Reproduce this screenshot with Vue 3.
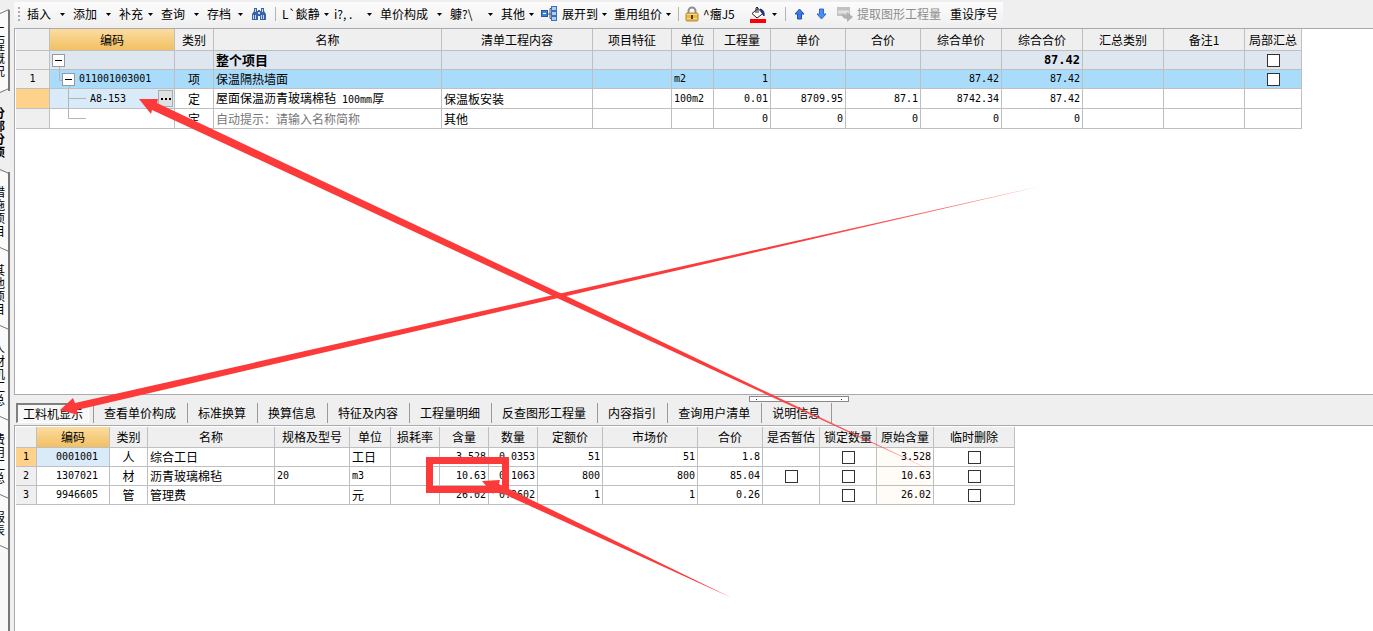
<script setup>
import { ref } from 'vue'

const sideTabs = [
  { text: '工程概况', size: 'l' },
  { text: '分部分项', size: 'l', active: true },
  { text: '措施项目', size: 'm' },
  { text: '其他项目', size: 'm' },
  { text: '人材机汇总', size: 'xl' },
  { text: '费用汇总', size: 'm' },
  { text: '报表', size: 's' },
]

const tools = [
  { label: '插入', caret: true },
  { label: '添加', caret: true },
  { label: '补充', caret: true },
  { label: '查询', caret: true },
  { label: '存档', caret: true },
  { icon: 'find', name: '查找' },
  { sep: true },
  { label: 'L`餤静', caret: true },
  { label: 'i?, .', caret: true },
  { label: '单价构成', caret: true },
  { label: '躿?\\', caret: true },
  { label: '其他', caret: true },
  { icon: 'expand', label: '展开到', caret: true },
  { label: '重用组价', caret: true },
  { sep: true },
  { icon: 'lock', label: '^癅J5' },
  { icon: 'fill', name: '填充颜色', caret: true },
  { sep: true },
  { icon: 'up', name: '上移' },
  { icon: 'down', name: '下移' },
  { icon: 'extract', label: '提取图形工程量', disabled: true },
  { label: '重设序号' },
]

const topHeads = ['', '编码', '类别', '名称', '清单工程内容', '项目特征', '单位', '工程量', '单价', '合价', '综合单价', '综合合价', '汇总类别', '备注1', '局部汇总']
const topRows = [
  { kind: 'root', no: '', code: '', type: '', name: '整个项目', content: '', unit: '', nums: ['', '', '', '', '87.42'], check: true },
  { kind: 'item', no: '1', code: '011001003001', type: '项', name: '保温隔热墙面', content: '', unit: 'm2', nums: ['1', '', '', '87.42', '87.42'], check: true },
  { kind: 'quota', no: '', code: 'A8-153', type: '定', name: '屋面保温沥青玻璃棉毡', spec: ' 100mm', tail: '厚', content: '保温板安装', unit: '100m2', nums: ['0.01', '8709.95', '87.1', '8742.34', '87.42'] },
  { kind: 'blank', no: '', code: '', type: '定', name: '自动提示：请输入名称简称', content: '其他', unit: '', nums: ['0', '0', '0', '0', '0'] },
]

const tabs = ['工料机显示', '查看单价构成', '标准换算', '换算信息', '特征及内容', '工程量明细', '反查图形工程量', '内容指引', '查询用户清单', '说明信息']
const activeTab = ref(0)

const lowHeads = ['', '编码', '类别', '名称', '规格及型号', '单位', '损耗率', '含量', '数量', '定额价', '市场价', '合价', '是否暂估', '锁定数量', '原始含量', '临时删除']
const lowRows = [
  { code: '0001001', type: '人', name: '综合工日', spec: '', unit: '工日', nums: ['', '3.528', '0.0353', '51', '51', '1.8'], est: false, orig: '3.528' },
  { code: '1307021', type: '材', name: '沥青玻璃棉毡', spec: '20', unit: 'm3', latin: true, nums: ['', '10.63', '0.1063', '800', '800', '85.04'], est: true, orig: '10.63' },
  { code: '9946605', type: '管', name: '管理费', spec: '', unit: '元', nums: ['', '26.02', '0.2602', '1', '1', '0.26'], est: false, orig: '26.02' },
]
</script>

<template>
  <div class="app">
    <nav class="side">
      <svg class="cap" width="10" height="5" viewBox="0 0 10 5" aria-hidden="true"><path d="M0 4.500L9 .5" /></svg>
      <button v-for="t in sideTabs" :key="t.text" type="button" class="side-tab" :class="['size-' + t.size, { active: t.active }]">
        <span>{{ t.text }}</span>
        <svg class="slant" width="10" height="5" viewBox="0 0 10 5" aria-hidden="true">
          <path :d="t.text === '工程概况' ? 'M0 4.500L9 .5' : 'M0 .5L9 4.500'" />
        </svg>
      </button>
      <div class="side-rest"></div>
    </nav>

    <main class="main">
      <header class="toolbar">
        <div class="tools">
          <span class="grip"></span>
          <template v-for="(t, i) in tools" :key="i">
            <span v-if="t.sep" class="sep"></span>
            <button v-else type="button" class="tool" :disabled="t.disabled" :aria-label="t.label || t.name">
              <svg v-if="t.icon === 'find'" width="16" height="16" viewBox="0 0 16 16">
                <path d="M3 2h3v3h1V4h2v1h1V2h3v3l2 3v6H9v-4H7v4H1V8l2-3z" fill="#3c62a8" />
                <path d="M4 3h1v3H4zM11 3h1v3h-1zM2 9h1v4H2zM4 9h1v4H4zM10 9h1v4h-1zM12 9h1v4h-1zM7 6h2v2H7z" fill="#c4d8f4" />
              </svg>
              <svg v-else-if="t.icon === 'expand'" width="17" height="16" viewBox="0 0 17 16">
                <path d="M6 8h4M9 2.500v10M9 2.500h2M9 12.500h2" fill="none" stroke="#556" />
                <rect x=".5" y="4.500" width="6" height="6" fill="#3f82d8" stroke="#2a55a0" />
                <path d="M2 7.500h3" stroke="#fff" />
                <rect x="10.500" y=".5" width="5" height="4" fill="#a9cdf5" stroke="#3f6fb5" />
                <rect x="10.500" y="5.500" width="5" height="4" fill="#a9cdf5" stroke="#3f6fb5" />
                <rect x="10.500" y="10.500" width="5" height="4" fill="#a9cdf5" stroke="#3f6fb5" />
              </svg>
              <svg v-else-if="t.icon === 'lock'" width="14" height="16" viewBox="0 0 14 16">
                <path d="M3.500 8V5a3.500 3.500 0 0 1 7 0v3" fill="none" stroke="#8f8f8f" stroke-width="2" />
                <rect x="1" y="7" width="12" height="8" rx="1" fill="#e8b84c" stroke="#b88a30" />
                <path d="M2 8.500h10M2 12.500h10" stroke="#f8dc90" />
                <path d="M6 9h2v4H6z" fill="#5b3d0c" />
              </svg>
              <svg v-else-if="t.icon === 'fill'" width="16" height="17" viewBox="0 0 16 17">
                <path d="M2 7.500l6-5 5 5-6 4.500z" fill="#fff" stroke="#222" />
                <path d="M6 7V2q1-2 2 0v5" fill="none" stroke="#222" />
                <path d="M10 3q5 1 4 7l-2-3z" fill="#1d2f86" stroke="#1d2f86" />
                <rect y="13" width="16" height="4" fill="#f00" />
              </svg>
              <svg v-else-if="t.icon === 'up'" width="11" height="12" viewBox="0 0 11 12">
                <path d="M5.500 1l4.500 5H7.500v5h-4V6H1z" fill="#3a7ae8" stroke="#1f50b8" />
              </svg>
              <svg v-else-if="t.icon === 'down'" width="11" height="12" viewBox="0 0 11 12">
                <path d="M5.500 11L10 6H7.500V1h-4v5H1z" fill="#4c8cf0" stroke="#3468cc" />
              </svg>
              <svg v-else-if="t.icon === 'extract'" width="16" height="16" viewBox="0 0 16 16">
                <path d="M0 1h13v9H0z" fill="#c2c2c2" />
                <path d="M1 4.500h11v3H1z" fill="#e2e2e2" />
                <path d="M5 6q0 4 5 3V6l6 5-6 5v-3q-6 0-5-7z" fill="#b0b0b0" />
              </svg>
              <span v-if="t.label">{{ t.label }}</span>
              <svg v-if="t.caret" class="caret" width="5" height="3" viewBox="0 0 5 3"><path d="M0 0h5L2.500 3z" /></svg>
            </button>
          </template>
        </div>
      </header>

      <section class="panel upper">
        <table class="grid top-grid">
          <colgroup><col v-for="(h, i) in topHeads" :key="i" :class="'t' + i" /></colgroup>
          <thead>
            <tr><th v-for="(h, i) in topHeads" :key="i" :class="{ picked: i === 1 }">{{ h }}</th></tr>
          </thead>
          <tbody>
            <tr v-for="(r, i) in topRows" :key="i" :class="r.kind">
              <td class="no num">{{ r.no }}</td>
              <td class="code">
                <div class="tree">
                  <svg v-if="r.kind === 'item'" class="branch" width="12" height="18" viewBox="0 0 12 18"><path d="M9.500 0v10.500h3" /></svg>
                  <svg v-if="r.kind === 'quota'" class="branch" width="36" height="19" viewBox="0 0 36 19"><path d="M18.500 0v19M18.500 9.500H36" /></svg>
                  <svg v-if="r.kind === 'blank'" class="branch" width="36" height="19" viewBox="0 0 36 19"><path d="M18.500 0v9.500H36" /></svg>
                  <button v-if="r.kind === 'root' || r.kind === 'item'" type="button" class="toggle" aria-label="折叠"></button>
                  <span class="num code-text">{{ r.code }}</span>
                  <button v-if="r.kind === 'quota'" type="button" class="more" aria-label="更多"><i></i><i></i><i></i></button>
                </div>
              </td>
              <td class="mid">{{ r.type }}</td>
              <td class="name">{{ r.name }}<span v-if="r.spec" class="num pre">{{ r.spec }}</span>{{ r.tail }}</td>
              <td>{{ r.content }}</td>
              <td></td>
              <td class="num">{{ r.unit }}</td>
              <td v-for="(n, k) in r.nums" :key="k" class="num right">{{ n }}</td>
              <td></td>
              <td></td>
              <td class="mid"><input v-if="r.check" type="checkbox" aria-label="局部汇总" /></td>
            </tr>
          </tbody>
        </table>
      </section>

      <div class="tabbar">
        <span class="splitter"><i></i><i></i></span>
        <button v-for="(t, i) in tabs" :key="t" type="button" class="tab" :class="{ first: i === 0 }" @click="activeTab = i">
          <span :class="{ pressed: i === activeTab }">{{ t }}</span>
        </button>
      </div>

      <section class="panel lower">
        <table class="grid low-grid">
          <colgroup><col v-for="(h, i) in lowHeads" :key="i" :class="'b' + i" /></colgroup>
          <thead>
            <tr><th v-for="(h, i) in lowHeads" :key="i" :class="{ picked: i === 1 }">{{ h }}</th></tr>
          </thead>
          <tbody>
            <tr v-for="(r, i) in lowRows" :key="r.code" :class="{ current: i === 0 }">
              <td class="no num">{{ i + 1 }}</td>
              <td class="code low-code num">{{ r.code }}</td>
              <td class="mid">{{ r.type }}</td>
              <td>{{ r.name }}</td>
              <td class="num">{{ r.spec }}</td>
              <td :class="{ num: r.latin }">{{ r.unit }}</td>
              <td v-for="(n, k) in r.nums" :key="k" class="num right">{{ n }}</td>
              <td class="mid"><input v-if="r.est" type="checkbox" aria-label="是否暂估" /></td>
              <td class="mid"><input type="checkbox" aria-label="锁定数量" /></td>
              <td class="num right orig">{{ r.orig }}</td>
              <td class="mid"><input type="checkbox" aria-label="临时删除" /></td>
            </tr>
          </tbody>
        </table>
      </section>
    </main>

    <svg class="marks" width="1373" height="631" viewBox="0 0 1373 631" aria-hidden="true">
      <defs>
        <linearGradient id="fadeA" gradientUnits="userSpaceOnUse" x1="140" y1="100" x2="933" y2="471">
          <stop offset=".75" stop-color="#fd3a3a" /><stop offset="1" stop-color="#fd3a3a" stop-opacity=".7" />
        </linearGradient>
        <linearGradient id="fadeB" gradientUnits="userSpaceOnUse" x1="60" y1="410" x2="1042" y2="186">
          <stop offset=".75" stop-color="#fd3a3a" /><stop offset="1" stop-color="#fd3a3a" stop-opacity=".6" />
        </linearGradient>
      </defs>
      <path fill="url(#fadeA)" d="M139 99L158 99L157 103L560 293L750 384L933 471L748 386L557 298L152 110L151 114z" />
      <path fill="url(#fadeB)" d="M60 410L73 398L75 403L558 294L1042 186L558 298L77 410L78 415z" />
      <path fill="#fd3a3a" d="M482 481L500 480L499 484L732 598L495 490L493 494z" />
      <rect x="429.500" y="460.500" width="76" height="29" fill="none" stroke="#fd3a3a" stroke-width="7" />
    </svg>
  </div>
</template>

<style>
body { background: #efefef; overflow: hidden; }
</style>

<style scoped>
* { box-sizing: border-box; }
.app {
  position: relative;
  display: flex;
  height: 100vh;
  background: #efefef;
  color: #000;
  font: 12px/16px "Noto Sans CJK SC", sans-serif;
  overflow: hidden;
}
button { font: inherit; color: inherit; border: 0; background: none; padding: 0; margin: 0; }

.side { position: relative; flex: none; width: 14px; display: flex; flex-direction: column; padding: 10px 4px 0 0; overflow: hidden; }
.side-tab {
  position: relative;
  flex: none;
  display: flex;
  justify-content: flex-end;
  align-items: center;
  width: 10px;
  padding-right: 3px;
  border-right: 2px solid #777;
  background: #fafafa;
}
.side-tab span { width: 12px; line-height: 13px; word-break: break-all; flex: none; }
.side-tab.active { background: #efefef; border-color: #efefef; font-weight: 700; }
.size-s { height: 51px; }
.size-m { height: 78px; }
.size-l { height: 81px; }
.size-xl { height: 91px; }
.cap, .slant { position: absolute; left: 0; z-index: 1; fill: none; stroke: #777; }
.cap { top: 9px; }
.slant { bottom: -2px; }
.side-rest { flex: 1; border-right: 2px solid #777; background: #f8f8f8; }

.main { flex: 1; min-width: 0; display: flex; flex-direction: column; }
.toolbar { flex: 0 0 28px; padding-top: 2px; }
.tools {
  display: grid;
  grid-template-columns: 13px 46px 46px 42px 46px 44px 24px 7px 52px 46px 70px 51px 40px 73px 64px 7px 65px 35px 9px 22px 21px 113px 53px;
  width: max-content;
  height: 24px;
  align-items: center;
  background: linear-gradient(#fcfcfc, #f6f6f6 50%, #efefef);
}
.grip { width: 2px; height: 14px; margin-left: 4px; background: repeating-linear-gradient(#aaa 0 2px, transparent 2px 4px); }
.sep { width: 1px; height: 14px; background: #b4b4b4; }
.tool { display: flex; align-items: center; gap: 4px; height: 22px; padding-right: 8px; white-space: nowrap; }
.tool svg { flex: none; }
.tool:disabled { color: #8d8d8d; padding-right: 0; }
.tool .caret { margin-left: auto; fill: #000; }

.panel { min-height: 0; background: #fff; border: solid #a9a9b0; border-width: 1px 0 0 1px; padding-left: 1px; overflow: hidden; }
.upper { flex: 365 1 0; border-bottom-width: 1px; }
.lower { flex: 204 1 0; padding-top: 1px; }

.grid { table-layout: fixed; border-collapse: separate; border-spacing: 0; }
.top-grid { width: 1286px; }
.low-grid { width: 999px; }
.grid th, .grid td {
  height: 19px;
  padding: 0 2px;
  border: solid #bfbfbf;
  border-width: 0 1px 1px 0;
  line-height: 16px;
  text-align: left;
  white-space: nowrap;
  overflow: hidden;
}
.grid th { height: 21px; padding: 0; background: #efefef; font-weight: 400; text-align: center; }
.top-grid th { height: 22px; }
.grid th.picked { background: linear-gradient(#fbdca0, #f2c063); }
.grid .num { font-family: "DejaVu Sans Mono", monospace; font-size: 10px; }
.grid .pre { white-space: pre; }
.grid .right { text-align: right; }
.grid .mid { text-align: center; }
.grid .no { text-align: center; background: #efefef; }
.grid .code { padding: 0; }
.grid .low-code { padding-left: 8px; text-align: center; }
.grid .orig { background: #fffbf6; }
.root td { background: #dee6f0; }
.root .name { font-weight: 700; font-size: 13px; }
.grid .root .right { font-weight: 700; font-size: 12px; }
.item td { background: #a9dcfb; }
.grid .quota td, .grid .blank td { height: 20px; }
.grid .quota .no, .grid .current .no { background: #ffd28c; }
.grid .quota .code, .grid .current .code { background: #d9eaf8; }
.blank .name { color: #777; }

.t0 { width: 34px; } .t1 { width: 125px; } .t2 { width: 39px; } .t3 { width: 228px; } .t4 { width: 151px; }
.t5 { width: 79px; } .t6 { width: 42px; } .t7, .t14 { width: 57px; } .t8, .t9 { width: 75px; }
.t10, .t11, .t12, .t13 { width: 81px; }
.b0 { width: 21px; } .b1 { width: 73px; } .b2 { width: 38px; } .b3 { width: 127px; } .b4 { width: 75px; }
.b5 { width: 41px; } .b6, .b7, .b8 { width: 49px; } .b9, .b11 { width: 65px; } .b10 { width: 95px; }
.b12, .b13, .b14 { width: 57px; } .b15 { width: 81px; }

.tree { display: flex; align-items: center; height: 18px; }
.quota .tree, .blank .tree { height: 19px; }
.root .tree { padding-left: 2px; }
.branch { flex: none; fill: none; stroke: #b4b4b4; }
.toggle {
  position: relative;
  flex: none;
  width: 13px;
  height: 13px;
  border: 1px solid #999;
  background: linear-gradient(#000, #000) center / 7px 1px no-repeat #fff;
}
.toggle::after { content: ""; position: absolute; left: 6px; top: 12px; width: 1px; height: 3px; background: #b4b4b4; }
.code-text { margin-left: 4px; }
.more { display: flex; justify-content: center; align-items: center; gap: 2px; width: 15px; height: 17px; margin: 0 1px 0 auto; border: 1px solid #adadad; background: #e1e1e1; }
.more i { width: 2px; height: 2px; background: #000; }

input[type="checkbox"] { appearance: none; display: block; width: 13px; height: 13px; margin: 0 auto; border: 1px solid #333; background: #fff; }

.tabbar { position: relative; flex: 0 0 30px; display: flex; align-items: flex-start; padding: 8px 0 0 2px; }
.tab { height: 20px; padding: 0 11px 0 10px; border-right: 1px solid #999; white-space: nowrap; }
.tab span { display: block; line-height: 20px; }
.tab.first { padding: 0 4px 0 0; }
.tab .pressed { padding: 0 5px; border: solid; border-width: 2px 1px 1px 2px; border-color: #808080 #fff #fff #808080; background: #f8f8f8; line-height: 17px; }
.splitter {
  position: absolute;
  left: 735px;
  top: 1px;
  display: flex;
  justify-content: space-between;
  align-items: center;
  width: 100px;
  height: 6px;
  padding: 0 6px;
  border: 1px solid #888;
  background: #fff;
}
.splitter i { width: 1px; height: 1px; background: #228; }

.marks { position: absolute; left: 0; top: 0; pointer-events: none; }
</style>
